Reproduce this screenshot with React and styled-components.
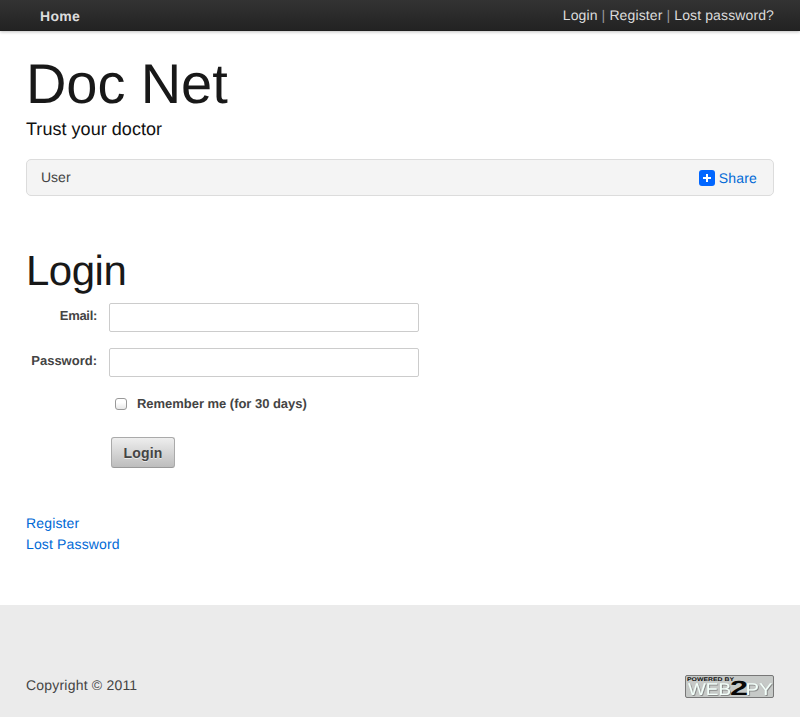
import React from "react";
import styled, { createGlobalStyle } from "styled-components";

const GlobalStyle = createGlobalStyle`
  *, *::before, *::after { box-sizing: border-box; }
  body {
    margin: 0;
    background: #fff;
    color: #444;
    font: 14px/21px "Liberation Sans", Helvetica, Arial, sans-serif;
    text-rendering: geometricPrecision;
    -webkit-font-smoothing: antialiased;
  }
`;

const Page = styled.div`
  display: flex;
  flex-direction: column;
  min-height: 717px;
`;

const TopBar = styled.nav`
  display: flex;
  justify-content: space-between;
  height: 31px;
  padding: 5px 26px 0 40px;
  background: linear-gradient(#333, #222);
  box-shadow: 0 1px 3px rgba(0, 0, 0, 0.25), inset 0 -1px 0 rgba(0, 0, 0, 0.1);
  color: #999;
  letter-spacing: 0.12px;
`;

const TopLink = styled.a`
  color: #dcdcdc;
  font-weight: ${(p) => (p.$strong ? 700 : 400)};
  line-height: ${(p) => (p.$strong ? "23px" : "21px")};
  letter-spacing: ${(p) => (p.$strong ? "0.3px" : "inherit")};
`;

const Content = styled.div`
  flex: 1;
  padding: 0 26px;
`;

const SiteTitle = styled.h1`
  margin: 24px 0 0;
  color: #181818;
  font-size: 56px;
  font-weight: 400;
  line-height: 58px;
  letter-spacing: -0.1px;
`;

const Tagline = styled.p`
  margin: 6px 0 0;
  color: #111;
  font-size: 18px;
  line-height: 21px;
  letter-spacing: 0.04px;
`;

const MenuBar = styled.div`
  display: flex;
  justify-content: space-between;
  height: 37px;
  margin-top: 19px;
  padding: 7px 16px 0 14px;
  border: 1px solid #dcdcdc;
  border-radius: 5px;
  background: #f4f4f4;
`;

const Share = styled.a`
  display: flex;
  gap: 4px;
  padding-top: 1px;
  color: #0069d6;
  letter-spacing: 0.2px;
`;

const ShareIcon = styled.svg`
  width: 16px;
  height: 16px;
  margin-top: 2px;
`;

const Heading = styled.h2`
  margin: 52px 0 0;
  color: #181818;
  font-size: 42px;
  font-weight: 400;
  line-height: 46px;
  letter-spacing: -0.5px;
`;

const Form = styled.form`
  display: grid;
  grid-template-columns: 71px 310px;
  column-gap: 12px;
  margin-top: 9px;
`;

const Label = styled.label`
  height: 45px;
  padding-top: 2px;
  font-size: 13px;
  font-weight: 700;
  text-align: right;
  letter-spacing: ${(p) => p.$tracking || "normal"};
`;

const TextField = styled.input`
  width: 310px;
  height: 29px;
  padding: 4px;
  border: 1px solid #ccc;
  border-radius: 2px;
  background: #fff;
  font: inherit;
`;

const Remember = styled.label`
  grid-column: 2;
  display: flex;
  align-items: center;
  gap: 10px;
  height: 21px;
  padding-left: 6px;
  font-size: 13px;
  font-weight: 700;
  letter-spacing: -0.03px;
`;

const Checkbox = styled.input`
  appearance: none;
  width: 12px;
  height: 12px;
  margin: 1px 0 0;
  border: 1px solid #999;
  border-radius: 3px;
  background: linear-gradient(#fff 35%, #e8e8e8);
`;

const LoginButton = styled.button`
  grid-column: 2;
  width: 64px;
  height: 31px;
  margin: 23px 0 0 2px;
  padding: 2px 0 0;
  border: 1px solid #aaa;
  border-bottom-color: #999;
  border-radius: 3px;
  background: linear-gradient(#eee, #bdbdbd);
  color: #444;
  font: inherit;
  font-weight: 700;
  letter-spacing: 0.2px;
  text-shadow: 0 1px 0 rgba(255, 255, 255, 0.6);
`;

const Links = styled.div`
  display: flex;
  flex-direction: column;
  align-items: flex-start;
  margin-top: 45px;
`;

const TextLink = styled.a`
  color: #0069d6;
  letter-spacing: 0.15px;
`;

const Footer = styled.footer`
  display: flex;
  justify-content: space-between;
  height: 112px;
  padding: 70px 26px 0;
  background: #ebebeb;
`;

const Copyright = styled.span`
  letter-spacing: 0.2px;
`;

const Badge = styled.svg`
  width: 89px;
  height: 24px;
`;

const BadgeText = styled.text`
  font-family: "Liberation Sans", Arial, sans-serif;
  font-size: ${(p) => p.$size}px;
  font-weight: ${(p) => (p.$bold ? 700 : 400)};
`;

const stretch = { lengthAdjust: "spacingAndGlyphs" };

function PoweredBy() {
  return (
    <Badge viewBox="0 0 89 24" aria-label="Powered by web2py">
      <defs>
        <filter id="relief" x="-10%" y="-10%" width="120%" height="130%">
          <feDropShadow dx="0.8" dy="0.8" stdDeviation="0.2" floodColor="#666" floodOpacity="0.8" />
        </filter>
      </defs>
      <rect x=".5" y=".5" width="88" height="22" rx="1.5" fill="#c6c9c7" stroke="#777" />
      <BadgeText $size={5.4} $bold x="2" y="5.9" fill="#111" textLength="47" {...stretch}>POWERED BY</BadgeText>
      <g fill="#f3fffa" filter="url(#relief)">
        <BadgeText $size={17} x="3" y="20" textLength="43" {...stretch}>WEB</BadgeText>
        <BadgeText $size={17} x="60.5" y="20" textLength="27" {...stretch}>PY</BadgeText>
      </g>
      <BadgeText $size={20.5} $bold x="45" y="20.3" fill="#080808" textLength="18" {...stretch}>2</BadgeText>
    </Badge>
  );
}

export default function App() {
  return (
    <Page>
      <GlobalStyle />
      <TopBar>
        <TopLink $strong>Home</TopLink>
        <div>
          <TopLink>Login</TopLink> | <TopLink>Register</TopLink> | <TopLink>Lost password?</TopLink>
        </div>
      </TopBar>
      <Content>
        <SiteTitle>Doc Net</SiteTitle>
        <Tagline>Trust your doctor</Tagline>
        <MenuBar>
          <span>User</span>
          <Share>
            <ShareIcon viewBox="0 0 16 16">
              <rect width="16" height="16" rx="3" fill="#0166ff" />
              <path d="M8 4v8M4 8h8" stroke="#fff" strokeWidth="2" />
            </ShareIcon>
            Share
          </Share>
        </MenuBar>
        <Heading>Login</Heading>
        <Form>
          <Label htmlFor="email" $tracking="-0.3px">Email:</Label>
          <TextField id="email" type="text" />
          <Label htmlFor="password">Password:</Label>
          <TextField id="password" type="password" />
          <Remember>
            <Checkbox type="checkbox" />
            Remember me (for 30 days)
          </Remember>
          <LoginButton type="button">Login</LoginButton>
        </Form>
        <Links>
          <TextLink>Register</TextLink>
          <TextLink>Lost Password</TextLink>
        </Links>
      </Content>
      <Footer>
        <Copyright>Copyright © 2011</Copyright>
        <PoweredBy />
      </Footer>
    </Page>
  );
}
